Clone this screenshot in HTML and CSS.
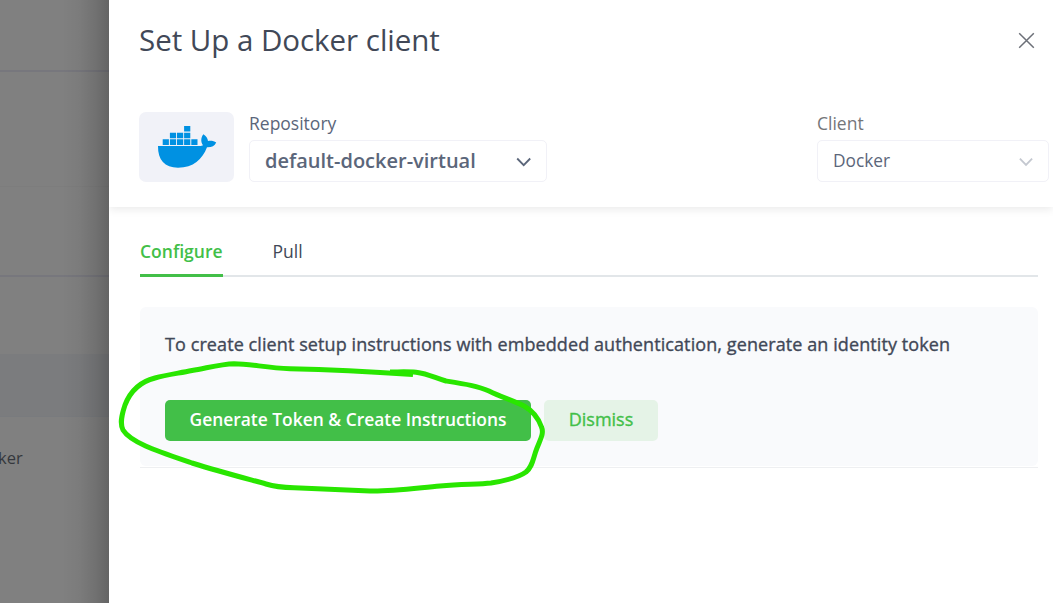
FILE: index.html
```html
<!DOCTYPE html>
<html lang="en">
<head>
<meta charset="utf-8">
<title>Set Up a Docker client</title>
<link rel="stylesheet" href="styles.css">
</head>
<body>
<div class="app">
  <aside class="backdrop">
    <div class="row row-top"></div>
    <div class="row row-a"></div>
    <div class="row row-b"></div>
    <div class="row row-c"></div>
    <div class="row row-active"></div>
    <div class="row row-text"><span class="peek">ker</span></div>
  </aside>
  <main class="panel">
    <header class="head">
      <div class="title-bar">
        <h1 class="title">Set Up a Docker client</h1>
        <svg class="close" width="18" height="18" viewBox="0 0 18 18"><path d="M1.2 1.2 15.800 15.800M15.800 1.2 1.2 15.800"/></svg>
      </div>
      <div class="selectors">
        <div class="logo">
          <svg width="60" height="44" viewBox="0 0 60 44">
            <path d="M1 21H42.500C44.100 21 45.300 20.700 46 20.200C43.700 17.500 43.600 12.500 46.400 9.300C49.300 11 50.600 13.300 51 16.100C53.800 15.400 57 16 59.200 17.500C57.600 21 54.500 22.500 50 22.300C45.200 34.500 36.500 42.700 21 42.700C7.600 42.700.8 35 1 21Z"/>
            <path d="M5.700 14.300h6.200v5.600h-6.200zM12.900 14.300h6.200v5.600h-6.200zM20 14.300h6.200v5.600h-6.200zM27.100 14.300h6.200v5.600h-6.200zM34.300 14.300h6.200v5.600h-6.200zM12.900 7.700h6.200v5.600h-6.200zM20 7.700h6.200v5.600h-6.200zM27.100 7.700h6.200v5.600h-6.200zM27.100 1h6.200v5.400h-6.200z"/>
          </svg>
        </div>
        <div class="field repo">
          <label class="label">Repository</label>
          <div class="select"><span class="value strong">default-docker-virtual</span>
            <svg class="chevron" width="16" height="10" viewBox="0 0 16 10"><path d="M1.200 1.500 7.700 8.200 14.200 1.500"/></svg></div>
        </div>
        <div class="field client">
          <label class="label">Client</label>
          <div class="select"><span class="value">Docker</span>
            <svg class="chevron" width="16" height="10" viewBox="0 0 16 10"><path d="M1.900 1.700 8 8 14.100 1.700"/></svg></div>
        </div>
      </div>
    </header>
    <section class="content">
      <nav class="tabs"><a class="tab active">Configure</a><a class="tab">Pull</a></nav>
      <div class="card-wrap">
        <div class="card">
          <p class="message">To create client setup instructions with embedded authentication, generate an identity token</p>
          <div class="actions">
            <button class="btn primary">Generate Token &amp; Create Instructions</button>
            <button class="btn secondary">Dismiss</button>
          </div>
        </div>
      </div>
    </section>
  </main>
  <svg class="marker" width="1053" height="603" viewBox="0 0 1053 603">
    <path d="M413 374.500C370 371.500 330 369.500 290 368.700C266 368 251 363.700 234 363.700C221 364 207 368 192 370.500C177 373.500 166 375 155 378C139 382 130 392 125 405C121 417 120 424 123 430C131 443 160 452 192 463C221 472 248 479 266 484C279 488 288 487.500 300 488C325 489 345 490 370 491C392 491.500 417 488 440 486C464 484 479 484.500 491 483C507 480.500 519 477 526 472C533 466 533 458 537 448C541 438 544 433 541.500 427C538 417 533 411 524 406C514 401 501 397 489 391C478 386 465 384 446 381C435 378 429 374 416 372.300C408 371.500 399 372 390 372"/>
  </svg>
</div>
</body>
</html>
```
FILE: styles.css
```css
* { box-sizing: border-box; }
body {
  margin: 0;
  font-family: "Open Sans", "Noto Sans", sans-serif;
  background: #fff;
  color: #414857;
}
.app { display: flex; width: 1053px; height: 603px; overflow: hidden; position: relative; }

/* Dimmed page behind the panel */
.backdrop { width: 109px; flex: none; background: #808080; position: relative; }
.backdrop::after {
  content: "";
  position: absolute;
  inset: 0;
  background: linear-gradient(to right, transparent 62px, rgba(0, 0, 0, .04) 80px, rgba(0, 0, 0, .12) 96px, rgba(0, 0, 0, .22) 109px);
}
.row { border-bottom: 1px solid transparent; }
.row-top { height: 72px; border-bottom: 2px solid #77777d; }
.row-a { height: 115px; border-color: #7d7d7d; }
.row-b { height: 90px; border-bottom: 2px solid #77777d; }
.row-c { height: 77px; }
.row-active { height: 63px; background: #7b7c7e; border-color: #797b7e; }
.row-text { padding-top: 29px; }
.peek { display: block; margin-left: -2px; font-size: 16.500px; line-height: 24px; color: #35383d; }

.panel { flex: 1; min-width: 0; background: #fff; }
.head { height: 207px; padding: 0 4px 0 30px; box-shadow: 0 2px 9px rgba(0, 0, 0, .09); clip-path: inset(0 0 -16px 0); }
.title-bar { display: flex; justify-content: space-between; height: 112px; padding: 19px 13px 0 0; }
.title { margin: 0; font-size: 29.500px; line-height: 41px; font-weight: 400; letter-spacing: -.03px; }
.close { margin-top: 13px; fill: none; stroke: #6c7078; stroke-width: 1.500; }

.selectors { display: flex; }
.logo { width: 95px; height: 70px; border-radius: 7px; background: #f1f2f8; padding: 13px 0 0 18px; }
.logo svg { display: block; fill: #0091e2; }
.field { height: 70px; color: #5b667a; }
.repo { width: 298px; margin-left: 15px; }
.client { width: 232px; margin-left: auto; }
.label { display: block; height: 28px; font-size: 17.500px; line-height: 23px; }
.client .label { color: #747679; }
.select {
  display: flex; align-items: center; justify-content: space-between;
  height: 42px; padding: 0 14px 0 15px; border: 1px solid #f1f1f7; border-radius: 5px;
}
.value { font-size: 17.300px; line-height: 24px; }
.strong { font-size: 20px; font-weight: 600; padding-bottom: 1px; }
.chevron { fill: none; stroke: #5b667a; stroke-width: 1.800; margin-top: 2px; }
.client .chevron { stroke: #c4c8d0; }

.content { padding: 23px 15px 0 31px; }
.tabs { display: flex; gap: 50px; height: 47px; border-bottom: 2px solid #e2e6e9; }
.tab { height: 47px; padding-top: 9px; font-size: 17.500px; line-height: 24px; }
.tab.active { color: #42bf48; font-weight: 600; border-bottom: 3px solid #42bf48; }

.card-wrap { margin-top: 30px; padding-bottom: 1px; border-bottom: 1px solid #eeeff1; }
.card { height: 159px; padding: 25px; border-radius: 6px; background: #f9fafc; }
.message { margin: 0; font-size: 18px; line-height: 24px; letter-spacing: .09px; -webkit-text-stroke: .35px currentColor; white-space: nowrap; }
.actions { display: flex; gap: 13px; margin-top: 44px; }
.btn {
  height: 41px; padding: 0 0 3px; border: 0; border-radius: 5px;
  font-family: inherit; font-size: 17.400px; white-space: nowrap;
}
.primary { width: 366px; background: #42bf48; color: #fff; font-weight: 600; }
.secondary { width: 114px; background: #e5f3e7; color: #42bf48; font-size: 18px; -webkit-text-stroke: .35px currentColor; }

/* Hand-drawn highlight over the primary action */
.marker { position: absolute; left: 0; top: 0; fill: none; stroke: #29e600; stroke-width: 5; stroke-linecap: butt; stroke-linejoin: round; pointer-events: none; }
```
